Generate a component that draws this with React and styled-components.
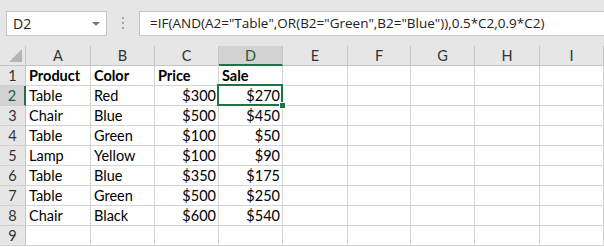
import React from 'react';
import styled, { createGlobalStyle } from 'styled-components';

const GlobalStyle = createGlobalStyle`
  html, body {
    margin: 0;
    padding: 0;
    background: #ffffff;
  }
`;

const columns = [
  { name: 'A', width: 65 },
  { name: 'B', width: 64 },
  { name: 'C', width: 64 },
  { name: 'D', width: 64 },
  { name: 'E', width: 65 },
  { name: 'F', width: 63 },
  { name: 'G', width: 64 },
  { name: 'H', width: 65 },
  { name: 'I', width: 64 },
];

const rows = [
  ['Product', 'Color', 'Price', 'Sale'],
  ['Table', 'Red', '$300', '$270'],
  ['Chair', 'Blue', '$500', '$450'],
  ['Table', 'Green', '$100', '$50'],
  ['Lamp', 'Yellow', '$100', '$90'],
  ['Table', 'Blue', '$350', '$175'],
  ['Table', 'Green', '$500', '$250'],
  ['Chair', 'Black', '$600', '$540'],
  [],
];

const selected = { row: 2, col: 3 };

const App = () => {
  return (
    <Wrap>
      <GlobalStyle />
      <Toolbar>
        <NameBox>
          <span>D2</span>
          <Caret />
        </NameBox>
        <Dots>
          <i />
          <i />
          <i />
        </Dots>
        <FormulaBox>=IF(AND(A2="Table",OR(B2="Green",B2="Blue")),0.5*C2,0.9*C2)</FormulaBox>
      </Toolbar>
      <Sheet $cols={columns.map(c => c.width + 'px').join(' ')}>
        <Corner>
          <svg width="14" height="13" viewBox="0 0 14 13">
            <polygon points="13,0 13,13 0,13" fill="#b5b5b5" />
          </svg>
        </Corner>
        {columns.map((c, i) => (
          <ColHead key={c.name} $active={i === selected.col}>
            {c.name}
          </ColHead>
        ))}
        {rows.map((r, ri) => (
          <React.Fragment key={ri}>
            <RowHead $active={ri + 1 === selected.row}>{ri + 1}</RowHead>
            {columns.map((c, ci) => {
              const value = r[ci] || '';
              const isNum = value.startsWith('$');
              return (
                <Cell
                  key={c.name}
                  $bold={ri === 0}
                  $right={isNum}
                  $selected={ri + 1 === selected.row && ci === selected.col}
                >
                  {value}
                </Cell>
              );
            })}
          </React.Fragment>
        ))}
      </Sheet>
    </Wrap>
  );
};

const Wrap = styled.div`
  width: 604px;
  height: 247px;
  overflow: hidden;
  background: #ffffff;
`;

const Toolbar = styled.div`
  display: flex;
  align-items: center;
  height: 46px;
  padding: 0 0 0 6px;
  background: #e6e6e6;
  box-sizing: border-box;
`;

const NameBox = styled.div`
  display: flex;
  align-items: center;
  justify-content: space-between;
  width: 101px;
  height: 25px;
  box-sizing: border-box;
  padding: 0 6px 0 6px;
  background: #ffffff;
  border: 1px solid #c6c6c6;
  font-family: 'Open Sans', 'Noto Sans', sans-serif;
  font-size: 14px;
  color: #222222;
`;

const Caret = styled.span`
  width: 0;
  height: 0;
  border-left: 4px solid transparent;
  border-right: 4px solid transparent;
  border-top: 4px solid #7a7a7a;
  margin-top: 1px;
`;

const Dots = styled.div`
  display: flex;
  flex-direction: column;
  align-items: center;
  gap: 3px;
  width: 32px;

  i {
    width: 2px;
    height: 2px;
    background: #a8a8a8;
  }
`;

const FormulaBox = styled.div`
  flex: 1;
  height: 25px;
  box-sizing: border-box;
  display: flex;
  align-items: center;
  padding-left: 10px;
  background: #ffffff;
  border: 1px solid #c6c6c6;
  border-right: none;
  font-family: 'Open Sans', 'Noto Sans', sans-serif;
  font-size: 13.5px;
  color: #222222;
  white-space: nowrap;
`;

const Sheet = styled.div`
  display: grid;
  grid-template-columns: 26px ${p => p.$cols};
  grid-auto-rows: 20px;
  font-family: Lato, 'Open Sans', sans-serif;
  font-size: 14.5px;
`;

const Corner = styled.div`
  display: flex;
  align-items: flex-end;
  justify-content: flex-end;
  padding: 0 2px 3px 0;
  box-sizing: border-box;
  background: #e6e6e6;
  border-right: 1px solid #c6c6c6;
  border-bottom: 1px solid #c6c6c6;
`;

const ColHead = styled.div`
  display: flex;
  align-items: center;
  justify-content: center;
  box-sizing: border-box;
  background: ${p => (p.$active ? '#d2d2d2' : '#e6e6e6')};
  color: ${p => (p.$active ? '#215c3a' : '#333333')};
  border-right: 1px solid #c6c6c6;
  border-bottom: ${p => (p.$active ? '2px solid #217346' : '1px solid #c6c6c6')};
  padding-top: ${p => (p.$active ? '1px' : '0')};
`;

const RowHead = styled.div`
  display: flex;
  align-items: center;
  justify-content: center;
  box-sizing: border-box;
  background: ${p => (p.$active ? '#d2d2d2' : '#e6e6e6')};
  color: ${p => (p.$active ? '#215c3a' : '#333333')};
  border-right: ${p => (p.$active ? '2px solid #217346' : '1px solid #c6c6c6')};
  border-bottom: 1px solid #d0d0d0;
`;

const Cell = styled.div`
  position: relative;
  display: flex;
  align-items: center;
  justify-content: ${p => (p.$right ? 'flex-end' : 'flex-start')};
  box-sizing: border-box;
  padding: 0 2px 0 3px;
  border-right: 1px solid #d4d4d4;
  border-bottom: 1px solid #d4d4d4;
  color: #000000;
  font-weight: ${p => (p.$bold ? 700 : 400)};
  white-space: nowrap;

  ${p =>
    p.$selected &&
    `
    &::before {
      content: '';
      position: absolute;
      left: -2px;
      top: -2px;
      right: -1px;
      bottom: -1px;
      border: 2px solid #217346;
      pointer-events: none;
    }
    &::after {
      content: '';
      position: absolute;
      right: -4px;
      bottom: -4px;
      width: 5px;
      height: 5px;
      background: #217346;
      border: 1px solid #ffffff;
      z-index: 2;
    }
  `}
`;

export default App;
